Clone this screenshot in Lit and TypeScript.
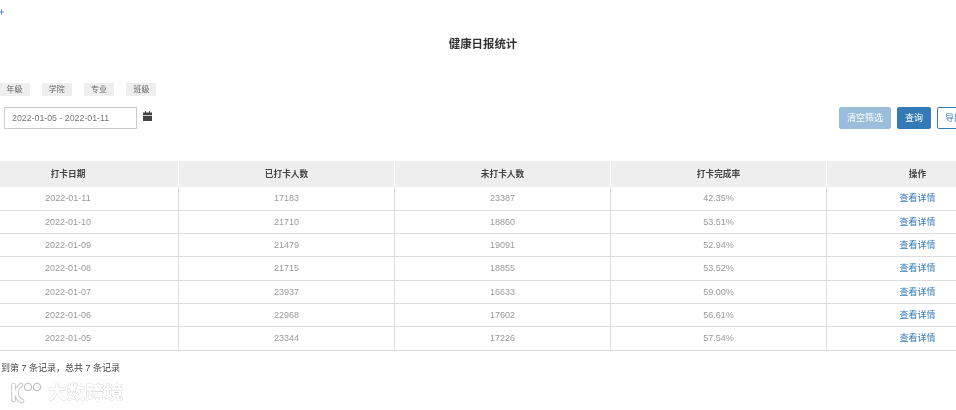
import { LitElement, html, css, svg } from "lit";
import { customElement } from "lit/decorators.js";

const rows = [
  ["2022-01-11", "17183", "23387", "42.35%"],
  ["2022-01-10", "21710", "18860", "53.51%"],
  ["2022-01-09", "21479", "19091", "52.94%"],
  ["2022-01-08", "21715", "18855", "53.52%"],
  ["2022-01-07", "23937", "16633", "59.00%"],
  ["2022-01-06", "22968", "17602", "56.61%"],
  ["2022-01-05", "23344", "17226", "57.54%"],
];
const FILTERS = ["年级", "学院", "专业", "班级"];

@customElement("app-root")
export class AppRoot extends LitElement {
  static styles = css`
    :host {
      display: block;
      width: 956px;
      height: 410px;
      overflow: hidden;
      position: relative;
      background: #fff;
      font-family: "Liberation Sans", "Noto Sans CJK SC", sans-serif;
      color: #333;
    }
    .page {
      width: 1050px;
      margin-left: -42px;
      filter: blur(0.45px);
    }
    .plus {
      height: 24px;
      padding: 8px 0 0 40.5px;
      box-sizing: border-box;
      display: flex;
    }
    .title {
      margin: 13px 0 0;
      height: 16px;
      line-height: 15px;
      text-align: center;
      font-size: 11.4px;
      font-weight: 700;
      color: #333;
      width: 1050px;
    }
    .filters {
      display: flex;
      gap: 12.3px;
      margin-top: 30px;
      padding-left: 41.5px;
      height: 13px;
    }
    .chip {
      width: 30px;
      height: 13px;
      background: #eee;
      border-radius: 1px;
      font-size: 8px;
      line-height: 13px;
      text-align: center;
      color: #666;
    }
    .tools {
      display: flex;
      align-items: flex-start;
      margin-top: 11px;
      padding-left: 46px;
      height: 54px;
    }
    .range {
      width: 133px;
      height: 22px;
      box-sizing: border-box;
      border: 1px solid #ccc;
      font-size: 8.8px;
      line-height: 20px;
      padding-left: 7px;
      color: #777;
    }
    .cal {
      margin: 4px 0 0 6px;
    }
    .btns {
      margin-left: auto;
      margin-right: 37px;
      display: flex;
      gap: 6px;
    }
    .btn {
      height: 22px;
      box-sizing: border-box;
      border-radius: 2px;
      font-size: 9px;
      line-height: 20px;
      text-align: center;
      border: 1px solid #337ab7;
    }
    .clear {
      width: 52px;
      background: #99bddb;
      border-color: #99bddb;
      color: #fff;
    }
    .query {
      width: 34px;
      background: #337ab7;
      color: #fff;
    }
    .export {
      width: 34px;
      background: #fff;
      color: #337ab7;
    }
    .table {
      display: grid;
      grid-template-columns: 221px 216px 216px 216px 181px;
      width: 1050px;
      font-size: 9px;
      text-align: center;
    }
    .th {
      height: 26.3px;
      line-height: 26px;
      background: #eee;
      font-weight: 700;
      color: #444;
      font-size: 8.7px;
      border-right: 1px solid #fff;
      box-sizing: border-box;
    }
    .td {
      height: 23.35px;
      line-height: 22.3px;
      box-sizing: border-box;
      border-bottom: 1px solid #ddd;
      border-right: 1px solid #ddd;
      color: #999;
    }
    .th:nth-child(5n),
    .td:nth-child(5n) {
      border-right: 0;
    }
    .td.link {
      color: #337ab7;
    }
    .foot {
      margin: 11px 0 0 6px;
      font-size: 9px;
      line-height: 12px;
      color: #444;
    }
    .mark {
      position: absolute;
      left: 9px;
      top: 381px;
      display: flex;
      align-items: center;
      gap: 5px;
    }
    .mark span {
      font-size: 18.6px;
      font-weight: 700;
      line-height: 24px;
      letter-spacing: 0.2px;
      color: #fff;
      -webkit-text-stroke: 0.5px #bdbdbd;
      paint-order: stroke;
      filter: blur(0.4px);
    }
    .logo {
      filter: blur(0.4px);
    }
  `;

  render() {
    return html`
      <div class="page">
        <div class="plus">
          <svg width="6" height="8" viewBox="0 0 6 8">
            <path d="M0 4h5M2.5 1.5v5" stroke="#5b93cc" stroke-width="1" fill="none" />
          </svg>
        </div>
        <h1 class="title">健康日报统计</h1>
        <div class="filters">
          ${FILTERS.map((f) => html`<div class="chip">${f}</div>`)}
        </div>
        <div class="tools">
          <div class="range">2022-01-05 - 2022-01-11</div>
          <svg class="cal" width="9" height="10" viewBox="0 0 9 10">
            <path d="M0 1.5h9V4H0zM0 4.8h9V10H0zM2 0h1v2H2zM6 0h1v2H6z" fill="#444" />
          </svg>
          <div class="btns">
            <div class="btn clear">清空筛选</div>
            <div class="btn query">查询</div>
            <div class="btn export">导出</div>
          </div>
        </div>
        <div class="table">
          ${["打卡日期", "已打卡人数", "未打卡人数", "打卡完成率", "操作"].map(
            (h) => html`<div class="th">${h}</div>`
          )}
          ${rows.map(
            (r) => html`
              ${r.map((c) => html`<div class="td">${c}</div>`)}
              <div class="td link">查看详情</div>
            `
          )}
        </div>
        <div class="foot">显示第 1 到第 7 条记录，总共 7 条记录</div>
      </div>
      <div class="mark">
        <svg class="logo" width="34" height="22" viewBox="0 0 34 22">
          ${svg`<path d="M4.5 3v15M12 3C8 6 7 9 7.5 12c.5 3 3 6 5.5 7" stroke="#c4c4c4" stroke-width="4.6" fill="none" stroke-linecap="round"/>
          <path d="M4.5 3v15M12 3C8 6 7 9 7.5 12c.5 3 3 6 5.5 7" stroke="#fff" stroke-width="2.8" fill="none" stroke-linecap="round"/>
          <circle cx="19" cy="5" r="3.6" stroke="#c4c4c4" stroke-width="1.3" fill="#fff"/>
          <circle cx="28" cy="5" r="3.6" stroke="#c4c4c4" stroke-width="1.3" fill="#fff"/>`}
        </svg>
        <span>大数跨境</span>
      </div>
    `;
  }
}
